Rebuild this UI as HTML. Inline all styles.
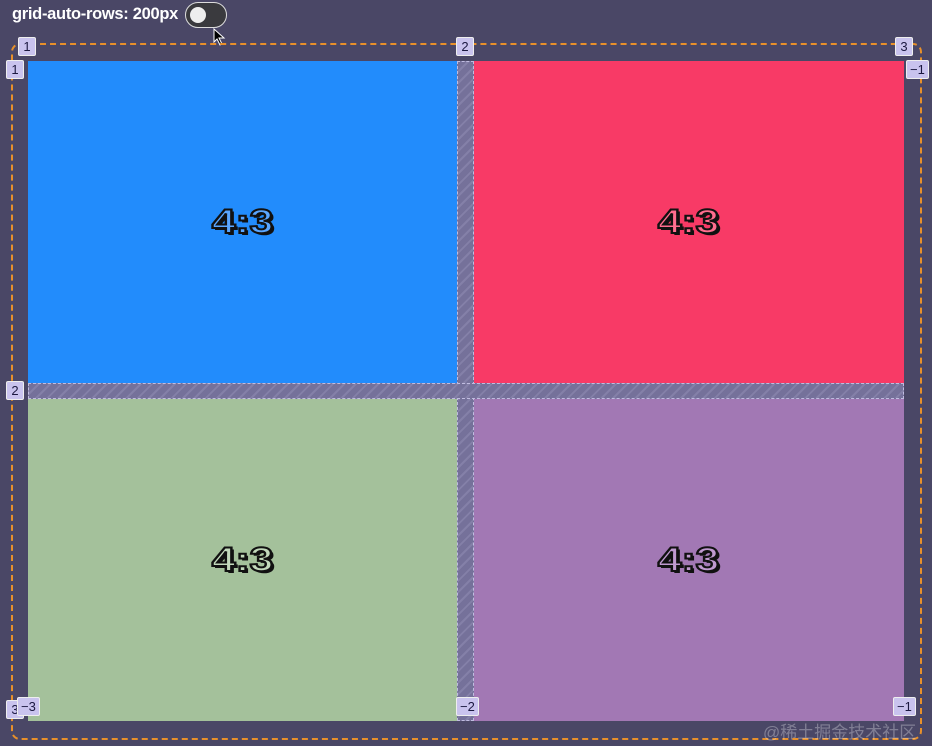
<!DOCTYPE html>
<html><head><meta charset="utf-8"><style>
*{margin:0;padding:0;box-sizing:border-box}
body{width:932px;height:746px;background:#4a4766;position:relative;overflow:hidden;font-family:"Liberation Sans",sans-serif}
.title{position:absolute;left:12px;top:5px;color:#fff;font-size:16.5px;font-weight:bold;letter-spacing:-0.3px}
.tog{position:absolute;left:185px;top:2px;width:42px;height:26px;border-radius:13px;background:#3a3a3e;border:1.5px solid #ddd}
.tog i{position:absolute;left:4px;top:4px;width:16px;height:16px;border-radius:50%;background:#eee}
.dash{position:absolute;left:11px;top:43px;width:911px;height:697px;border:2px dashed #e8902a;border-radius:9px}
.gap{position:absolute;background:repeating-linear-gradient(135deg,#75719a 0 6px,#8480a8 6px 8px);border:1px dashed #c0bce0}
.cell{position:absolute;display:flex;align-items:center;justify-content:center;font-size:34px;font-weight:bold;color:transparent;-webkit-text-stroke:2px #111;text-shadow:2px 2px 0 #111;letter-spacing:0px;transform-origin:center}
.cell span{display:inline-block;transform:scaleX(1.25)}
.lb{position:absolute;background:#c9c3ee;color:#1b1840;font-size:13px;line-height:17px;text-align:center;border-radius:2px;border:1px solid #eee;padding:0 3px;min-width:18px;height:19px}
</style></head><body>
<div class="title">grid-auto-rows: 200px</div>
<div class="tog"><i></i></div>
<svg style="position:absolute;left:213px;top:28px" width="14" height="18"><path d="M1 1 L1 14 L4 11 L7 17 L9 16 L6 10 L11 10 Z" fill="#000" stroke="#fff" stroke-width="1"/></svg>
<div class="dash"></div>
<div class="gap" style="left:457px;top:61px;width:17px;height:660px"></div>
<div class="gap" style="left:28px;top:383px;width:876px;height:16px"></div>
<div class="cell" style="left:28px;top:61px;width:429px;height:322px;background:#228cfc;color:#5aa6ff"><span>4:3</span></div>
<div class="cell" style="left:474px;top:61px;width:430px;height:322px;background:#f83a66;color:#ff6e8f"><span>4:3</span></div>
<div class="cell" style="left:28px;top:399px;width:429px;height:322px;background:#a4c19b;color:#c2d9bb"><span>4:3</span></div>
<div class="cell" style="left:474px;top:399px;width:430px;height:322px;background:#a278b4;color:#c09ad0"><span>4:3</span></div>
<div class="lb" style="left:18px;top:37px">1</div>
<div class="lb" style="left:456px;top:37px">2</div>
<div class="lb" style="left:895px;top:37px">3</div>
<div class="lb" style="left:6px;top:60px">1</div>
<div class="lb" style="left:6px;top:381px">2</div>
<div class="lb" style="left:906px;top:60px">−1</div>
<div class="lb" style="left:6px;top:700px">3</div>
<div class="lb" style="left:17px;top:697px">−3</div>
<div class="lb" style="left:456px;top:697px">−2</div>
<div class="lb" style="left:893px;top:697px">−1</div>
<div style="position:absolute;left:763px;top:718px;color:rgba(255,255,255,0.3);font-size:17px;font-family:'Liberation Sans','Noto Sans CJK SC',sans-serif">@稀土掘金技术社区</div>
</body></html>
